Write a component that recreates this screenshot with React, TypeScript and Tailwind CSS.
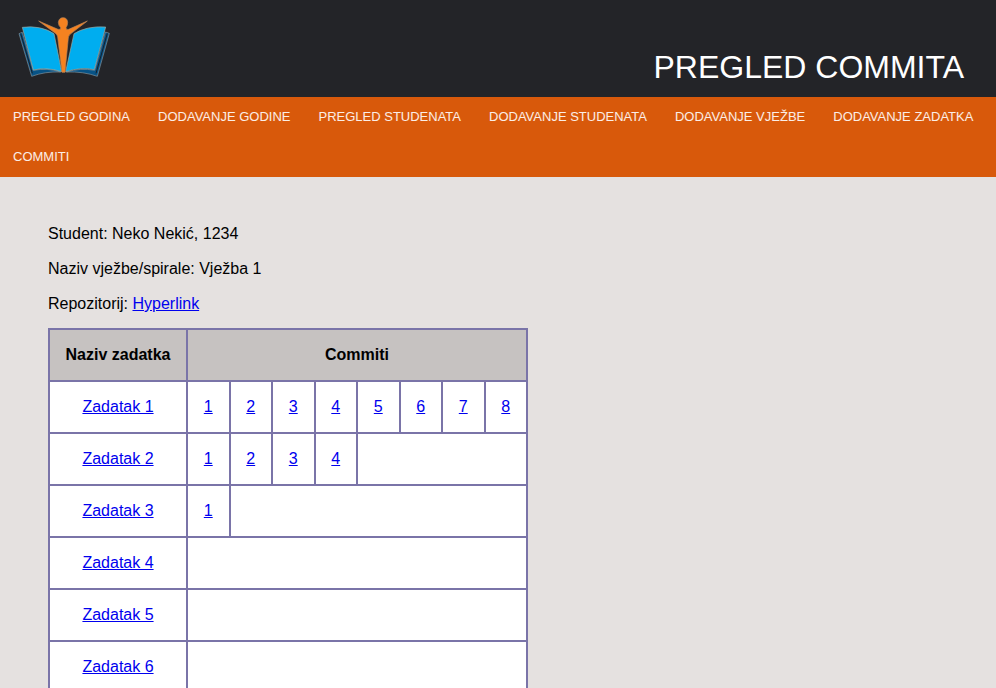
const navItems = [
  'Pregled godina',
  'Dodavanje godine',
  'Pregled studenata',
  'Dodavanje studenata',
  'Dodavanje vježbe',
  'Dodavanje zadatka',
  'Commiti',
];

const maxCommits = 8;

const tasks = [
  { name: 'Zadatak 1', commits: 8 },
  { name: 'Zadatak 2', commits: 4 },
  { name: 'Zadatak 3', commits: 1 },
  { name: 'Zadatak 4', commits: 0 },
  { name: 'Zadatak 5', commits: 0 },
  { name: 'Zadatak 6', commits: 0 },
];

const cell = 'h-[52px] border-2 border-[#7a74a8] p-0 text-center';
const link = 'text-[#0000ee] underline';

function Logo() {
  return (
    <svg viewBox="0 0 330 225" className="h-[75px] w-[110px]" role="img" aria-label="Logo">
      <g strokeLinejoin="round">
        <path d="M27 77 L37 73 L70 187 Q112 179 152 192 Q105 190 65 205 Z" fill="#075386" stroke="#8495a0" strokeWidth="2" />
        <path d="M32 76 L67 196" stroke="#17202a" strokeWidth="3" />
        <path d="M298 76 L286 72 L254 187 Q213 179 169 192 Q220 190 262 205 Z" fill="#075386" stroke="#8495a0" strokeWidth="2" />
        <path d="M292 76 L258 196" stroke="#17202a" strokeWidth="3" />
        <path d="M37 58 Q92 51 132 77 L155 191 Q108 176 70 186 Z" fill="#00adef" stroke="#a5a99e" strokeWidth="2" />
        <path d="M287 57 Q231 53 192 77 L167 191 Q215 176 253 185 Z" fill="#00adef" stroke="#a5a99e" strokeWidth="2" />
        <path d="M86 39 L144 64 Q152 67 152 59 Q145 53 145 43 Q147 29 159 29 Q172 29 173 43 Q173 53 168 59 Q168 67 176 64 L232 39 L180 79 Q174 84 174 100 L165 193 L156 193 L144 96 Q144 82 138 77 Z" fill="#f58220" stroke="#b98558" strokeWidth="2" />
      </g>
    </svg>
  );
}

export default function App() {
  return (
    <div className="min-h-screen bg-[#e5e1e0] font-['Liberation_Sans',Arial,sans-serif] text-base text-black">
      <header className="flex h-[97px] items-end justify-between bg-[#232428] pr-8 pl-[10px]">
        <div className="self-start pt-2">
          <Logo />
        </div>
        <h1 className="pb-2 text-[32px] leading-[44px] text-white uppercase">Pregled commita</h1>
      </header>

      <nav className="bg-[#d8590b]">
        <ul className="flex flex-wrap gap-x-0.5">
          {navItems.map((item) => (
            <li key={item}>
              <a href="#" className="block px-[13px] text-[13px] leading-10 text-white/90 uppercase">
                {item}
              </a>
            </li>
          ))}
        </ul>
      </nav>

      <main className="px-12 pt-12">
        <div className="flex flex-col gap-[17px] leading-[18px]">
          <p>Student: Neko Nekić, 1234</p>
          <p>Naziv vježbe/spirale: Vježba 1</p>
          <p>
            Repozitorij: <a href="#" className={link}>Hyperlink</a>
          </p>
        </div>

        <table className="mt-[15px] w-[480px] table-fixed border-collapse bg-white">
          <colgroup>
            <col className="w-[138px]" />
            <col span={maxCommits} />
          </colgroup>
          <thead>
            <tr className="bg-[#c6c2c1]">
              <th scope="col" className={cell}>Naziv zadatka</th>
              <th scope="col" colSpan={maxCommits} className={cell}>Commiti</th>
            </tr>
          </thead>
          <tbody>
            {tasks.map((task) => (
              <tr key={task.name}>
                <td className={cell}>
                  <a href="#" className={link}>{task.name}</a>
                </td>
                {Array.from({ length: task.commits }, (_, i) => (
                  <td key={i} className={cell}>
                    <a href="#" className={link}>{i + 1}</a>
                  </td>
                ))}
                {task.commits < maxCommits && (
                  <td colSpan={maxCommits - task.commits} className={cell} />
                )}
              </tr>
            ))}
          </tbody>
        </table>
      </main>
    </div>
  );
}
